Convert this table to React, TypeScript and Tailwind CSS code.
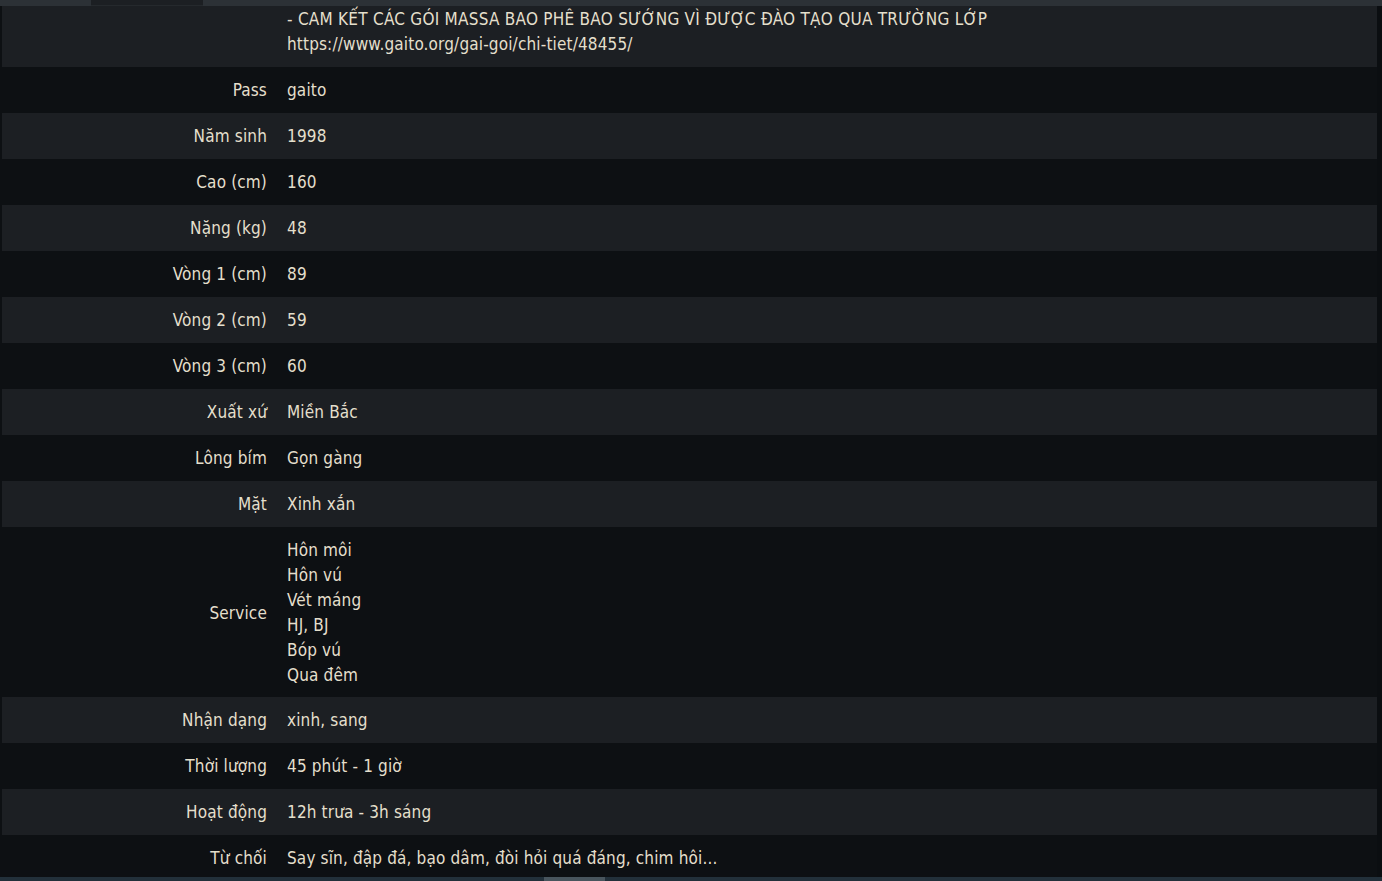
import React from "react";

const rows: { label: string; value: string[] }[] = [
  { label: "Pass", value: ["gaito"] },
  { label: "Năm sinh", value: ["1998"] },
  { label: "Cao (cm)", value: ["160"] },
  { label: "Nặng (kg)", value: ["48"] },
  { label: "Vòng 1 (cm)", value: ["89"] },
  { label: "Vòng 2 (cm)", value: ["59"] },
  { label: "Vòng 3 (cm)", value: ["60"] },
  { label: "Xuất xứ", value: ["Miền Bắc"] },
  { label: "Lông bím", value: ["Gọn gàng"] },
  { label: "Mặt", value: ["Xinh xắn"] },
  { label: "Service", value: ["Hôn môi", "Hôn vú", "Vét máng", "HJ, BJ", "Bóp vú", "Qua đêm"] },
  { label: "Nhận dạng", value: ["xinh, sang"] },
  { label: "Thời lượng", value: ["45 phút - 1 giờ"] },
  { label: "Hoạt động", value: ["12h trưa - 3h sáng"] },
  { label: "Từ chối", value: ["Say sĩn, đập đá, bạo dâm, đòi hỏi quá đáng, chim hôi..."] },
];

export default function App() {
  return (
    <div
      className="h-[881px] w-full overflow-hidden bg-[#0d1013] flex flex-col text-[#e4dfcc] text-[17px] leading-[25px] tracking-[0.15px]"
      style={{ fontFamily: '"DejaVu Sans Condensed", "DejaVu Sans", sans-serif' }}
    >
      <div className="h-[6px] shrink-0 bg-[#2c3136] flex">
        <div className="ml-[91px] w-[112px] h-[6px] bg-[#1c1f23] border-b border-[#25292d]" />
      </div>
      <div className="flex-1 overflow-hidden flex">
        <div className="flex-1 flex flex-col pl-[2px]">
          <div className="flex bg-[#1c1f23] pt-[1px] pb-[10px] shrink-0">
            <div className="w-[275px] shrink-0" />
            <div className="pl-[10px]">
              <div className="tracking-[0.25px]">- CAM KẾT CÁC GÓI MASSA BAO PHÊ BAO SƯỚNG VÌ ĐƯỢC ĐÀO TẠO QUA TRƯỜNG LỚP</div>
              <div>https://www.gaito.org/gai-goi/chi-tiet/48455/</div>
            </div>
          </div>
          {rows.map((r, i) => (
            <div
              key={r.label}
              className={`flex items-center shrink-0 ${i % 2 === 1 ? "bg-[#1c1f23]" : "bg-[#0d1013]"} ${
                r.value.length > 1 ? "pt-[11px] pb-[9px]" : "pt-[11px] pb-[10px]"
              }`}
            >
              <div className="w-[275px] shrink-0 pr-[10px] text-right">{r.label}</div>
              <div className="pl-[10px]">
                {r.value.map((v) => (
                  <div key={v}>{v}</div>
                ))}
              </div>
            </div>
          ))}
        </div>
        <div className="w-[5px] shrink-0 bg-[#0b0e11]" />
      </div>
      <div className="h-[4px] shrink-0 bg-[#22303a] flex">
        <div className="ml-[544px] w-[61px] h-[4px] bg-[#48555d]" />
      </div>
    </div>
  );
}
